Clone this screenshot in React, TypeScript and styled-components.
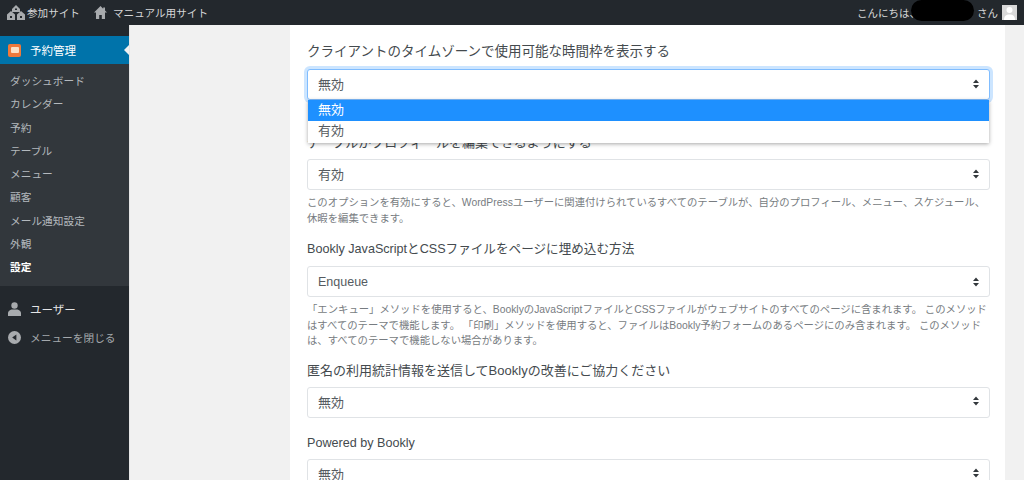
import React from "react";
import styled, { createGlobalStyle } from "styled-components";

const Global = createGlobalStyle`
  html, body { margin: 0; padding: 0; height: 480px; overflow: hidden; background: #f1f1f1; }
  body { font-family: "Liberation Sans", "Noto Sans CJK JP", sans-serif; }
`;
const Page = styled.div`
  width: 1024px; height: 480px; overflow: hidden; display: flex; flex-direction: column;
`;
const TopBar = styled.header`
  height: 25px; flex: none; background: #23282d; font-size: 10.6px;
  display: flex; align-items: center; padding: 0 7px 0 6px;
`;
const BarItem = styled.span<{ $gap: number }>`
  display: flex; align-items: center; gap: ${(p) => p.$gap}px; margin-right: 14px; color: #d5d6d7;
`;
const Spacer = styled.div`flex: 1;`;
const Greeting = styled.span`
  display: flex; align-items: center; color: #d5d6d7; font-size: 10.5px;
`;
const Redact = styled.span`
  width: 63px; height: 21px; background: #000; border-radius: 11px; margin: -4px 3px 0 -9px;
`;
const Avatar = styled.span`
  width: 15px; height: 15px; margin-left: 4px; background: #d8d8d8; display: flex;
`;
const Body = styled.div`flex: 1; display: flex; min-height: 0;`;
const Side = styled.nav`
  width: 129px; flex: none; background: #23282d; padding-top: 11px; border-right: 1px solid #e6e6e6;
`;
const ActiveItem = styled.div`
  position: relative; height: 28px; background: #0073aa; color: #fff; font-size: 11.5px;
  display: flex; align-items: center; gap: 9px; padding-left: 8px;
  &::after {
    content: ""; position: absolute; right: 0; top: 9px; border: 5px solid transparent;
    border-right-color: #f1f1f1; border-left-width: 0;
  }
`;
const AppIcon = styled.span`
  width: 13px; height: 13px; border-radius: 2px; background: #f0793a; display: flex;
  align-items: center; justify-content: center; flex: none;
  &::after { content: ""; width: 8px; height: 6px; background: #fde0c4; border-radius: 1px; }
`;
const Sub = styled.div`
  background: #32373c; padding: 6px 0 7px; height: 222px; box-sizing: border-box;
`;
const SubItem = styled.div<{ $on?: boolean }>`
  height: 23.3px; line-height: 23.3px; padding-left: 10px; font-size: 10.7px;
  color: ${(p) => (p.$on ? "#fff" : "#b4b9be")}; font-weight: ${(p) => (p.$on ? 700 : 400)};
`;
const SideRow = styled.div<{ $mt: number; $strong?: boolean }>`
  margin-top: ${(p) => p.$mt}px; height: 28px; display: flex; align-items: center; gap: 9px; padding-left: 8px;
  font-size: ${(p) => (p.$strong ? 11.5 : 10.7)}px; color: ${(p) => (p.$strong ? "#e4e5e6" : "#a4a8ac")};
`;
const Main = styled.main`
  flex: 1; display: flex; padding-left: 160px; padding-right: 19px; min-width: 0;
`;
const Panel = styled.section`
  flex: 1; background: #fff; padding: 19px 15px 0 17px; position: relative; min-width: 0;
`;
const Field = styled.div<{ $mt?: number }>`
  margin-top: ${(p) => p.$mt ?? 0}px; position: relative;
`;
const Label = styled.div<{ $size: number }>`
  font-size: ${(p) => p.$size}px; line-height: 16px; color: #444a4e; height: 16px; white-space: nowrap;
`;
const SelectBox = styled.div<{ $focus?: boolean; $mt: number; $size: number; $pb: number }>`
  margin-top: ${(p) => p.$mt}px; height: 31px; box-sizing: border-box;
  border: 1px solid ${(p) => (p.$focus ? "#80bdff" : "#e0e3e6")};
  border-radius: 3px; background: #fff; display: flex; align-items: center; justify-content: space-between;
  padding: 0 10px ${(p) => p.$pb}px 10px; font-size: ${(p) => p.$size}px; color: #555b60;
  box-shadow: ${(p) => (p.$focus ? "0 0 0 3px rgba(0,123,255,.2)" : "none")};
`;
const Arrows = styled.svg`width: 6px; height: 10px; flex: none;`;
const Help = styled.p<{ $mt: number }>`
  margin: ${(p) => p.$mt}px 0 0; font-size: 10.35px; line-height: 15.5px; color: #777c81;
`;
const Popup = styled.div`
  position: absolute; left: 1px; right: 1px; top: 56px; background: #fff; z-index: 2; height: 43px;
  box-shadow: 0 1px 4px rgba(0,0,0,.35);
`;
const Option = styled.div<{ $on?: boolean }>`
  height: 21px; line-height: 20px; padding-left: 10px; font-size: 13px;
  background: ${(p) => (p.$on ? "#1e90ff" : "#fff")}; color: ${(p) => (p.$on ? "#fff" : "#555b60")};
`;

const SortArrows = () => (
  <Arrows viewBox="0 0 6 10"><path d="M3 .5 6 4H0zM3 9.500 0 6h6z" fill="#33383c" /></Arrows>
);
const Sites = () => (
  <svg width="20" height="15" viewBox="0 0 20 15" fill="#a8abae">
    <path d="M10 0 14 4v3H6V4zM9 3.500v1.500h2V3.500zM5 6l4 3.500V15H1V9.500zM4 11v2h2v-2zM15 6l4 3.500V15h-8V9.500zM14 11v2h2v-2z" fillRule="evenodd" />
  </svg>
);
const Home = () => (
  <svg width="13" height="13" viewBox="0 0 13 13" fill="#a8abae">
    <path d="M6.500 0 0 6.500h2V13h3.200V9h2.600v4H11V6.500h2L11 4.500V1.500H9.200v1.200z" />
  </svg>
);
const User = () => (
  <svg width="13" height="14" viewBox="0 0 13 14" fill="#a8abae">
    <circle cx="6.500" cy="3.500" r="3.200" />
    <path d="M0 14v-3c0-2 2-3 3.500-3.500h6C11 8 13 9 13 11v3z" />
  </svg>
);
const Collapse = () => (
  <svg width="13" height="13" viewBox="0 0 14 14">
    <circle cx="7" cy="7" r="7" fill="#a8abae" />
    <path d="M9 3.800v6.400L4.500 7z" fill="#23282d" />
  </svg>
);

const Select = ({ v, focus, mt = 9, size = 13, pb = 2 }: { v: string; focus?: boolean; mt?: number; size?: number; pb?: number }) => (
  <SelectBox $focus={focus} $mt={mt} $size={size} $pb={pb}>
    <span>{v}</span>
    <SortArrows />
  </SelectBox>
);

export default function App() {
  const menu = ["ダッシュボード", "カレンダー", "予約", "テーブル", "メニュー", "顧客", "メール通知設定", "外観"];
  return (
    <Page>
      <Global />
      <TopBar>
        <BarItem $gap={1}><Sites />参加サイト</BarItem>
        <BarItem $gap={6}><Home />マニュアル用サイト</BarItem>
        <Spacer />
        <Greeting>
          こんにちは、<Redact />さん
          <Avatar>
            <svg width="15" height="15" viewBox="0 0 15 15" fill="#fff">
              <circle cx="7.500" cy="5" r="3" /><path d="M2 15c0-4 2-5.500 5.500-5.500S13 11 13 15z" />
            </svg>
          </Avatar>
        </Greeting>
      </TopBar>
      <Body>
        <Side>
          <ActiveItem><AppIcon />予約管理</ActiveItem>
          <Sub>
            {menu.map((m) => <SubItem key={m}>{m}</SubItem>)}
            <SubItem $on>設定</SubItem>
          </Sub>
          <SideRow $mt={9} $strong><User />ユーザー</SideRow>
          <SideRow $mt={0}><Collapse />メニューを閉じる</SideRow>
        </Side>
        <Main>
          <Panel>
            <Field>
              <Label $size={13.5}>クライアントのタイムゾーンで使用可能な時間枠を表示する</Label>
              <Select v="無効" focus mt={9} />
              <Popup>
                <Option $on>無効</Option>
                <Option>有効</Option>
              </Popup>
            </Field>
            <Field $mt={35}>
              <Label $size={13}>テーブルがプロフィールを編集できるようにする</Label>
              <Select v="有効" mt={8} />
              <Help $mt={5}>このオプションを有効にすると、WordPressユーザーに関連付けられているすべてのテーブルが、自分のプロフィール、メニュー、スケジュール、休暇を編集できます。</Help>
            </Field>
            <Field $mt={15}>
              <Label $size={12.6}>Bookly JavaScriptとCSSファイルをページに埋め込む方法</Label>
              <Select v="Enqueue" size={12.5} pb={0} />
              <Help $mt={5}>「エンキュー」メソッドを使用すると、BooklyのJavaScriptファイルとCSSファイルがウェブサイトのすべてのページに含まれます。 このメソッドはすべてのテーマで機能します。 「印刷」メソッドを使用すると、ファイルはBookly予約フォームのあるページにのみ含まれます。 このメソッドは、すべてのテーマで機能しない場合があります。</Help>
            </Field>
            <Field $mt={14}>
              <Label $size={13}>匿名の利用統計情報を送信してBooklyの改善にご協力ください</Label>
              <Select v="無効" mt={8} />
            </Field>
            <Field $mt={17}>
              <Label $size={12.6}>Powered by Bookly</Label>
              <Select v="無効" mt={8} />
            </Field>
          </Panel>
        </Main>
      </Body>
    </Page>
  );
}
